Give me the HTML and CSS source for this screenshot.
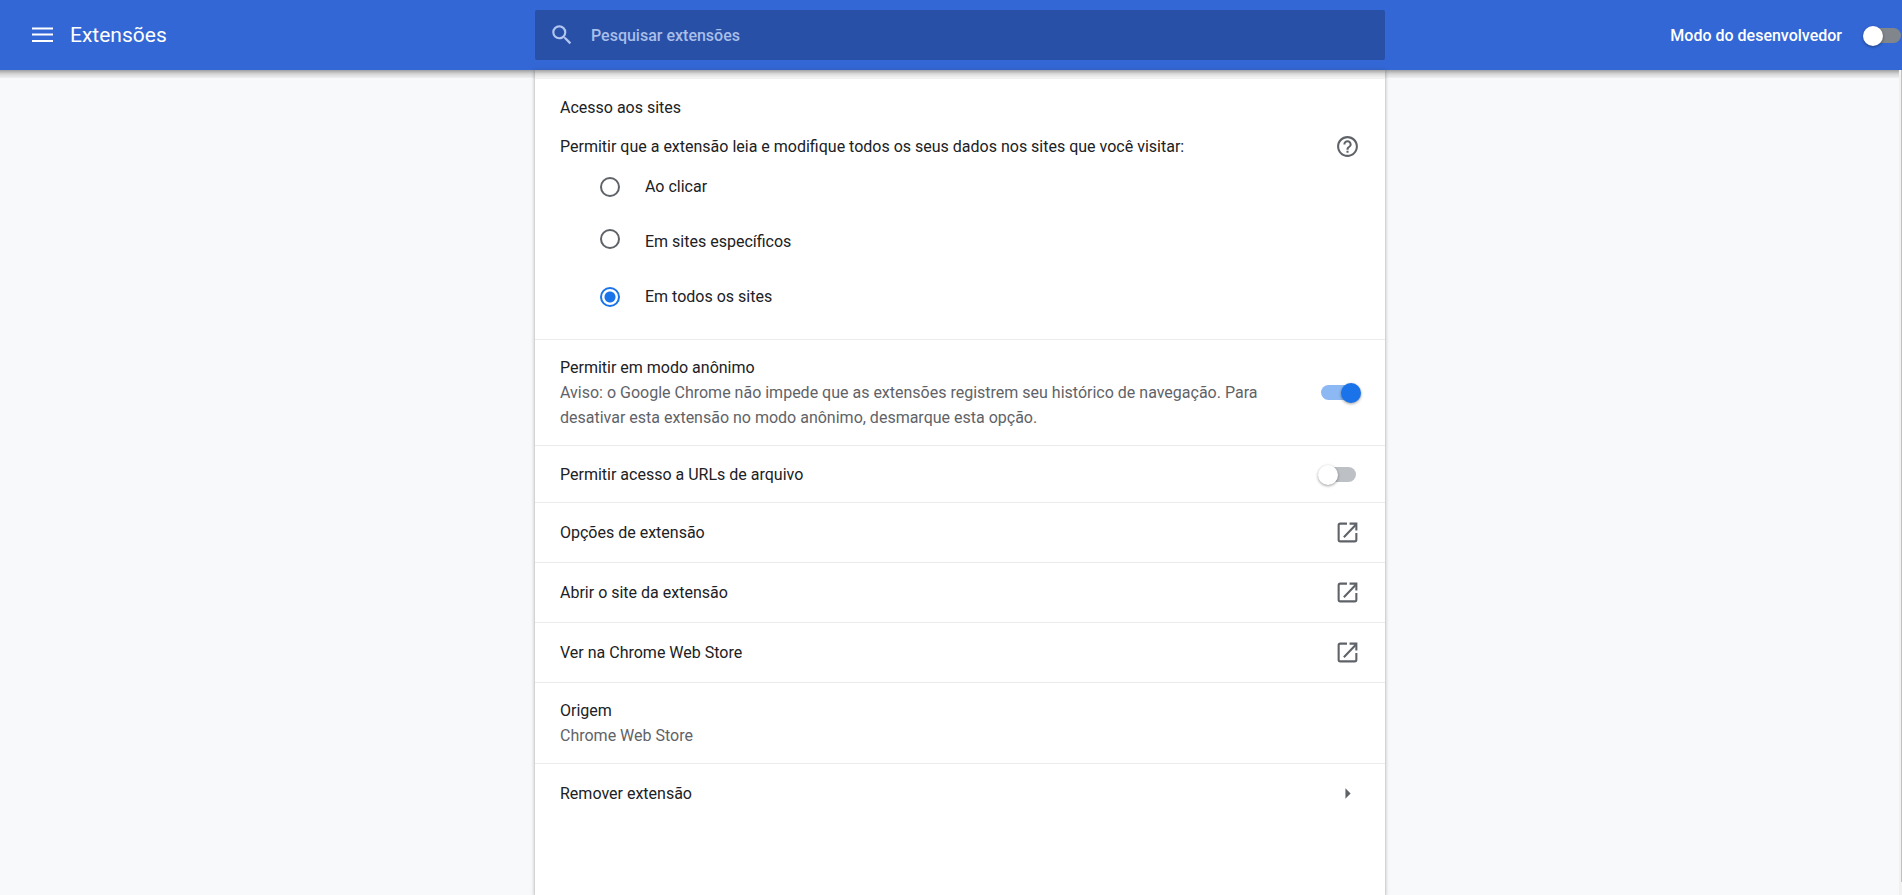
FILE: index.html
```html
<!DOCTYPE html>
<html lang="pt-BR">
<head>
<meta charset="utf-8">
<meta name="viewport" content="width=device-width, initial-scale=1">
<title>Extensões</title>
<link rel="stylesheet" href="styles.css">
</head>
<body>
<header class="toolbar">
  <div class="toolbar-start">
    <button class="icon-button" type="button" aria-label="Menu principal">
      <svg class="menu-icon" viewBox="0 0 21 16" aria-hidden="true"><path d="M0 .5h21v2H0zM0 6.500h21v2H0zM0 13h21v2H0z"/></svg>
    </button>
    <h1 class="title">Extensões</h1>
  </div>
  <label class="search">
    <svg class="search-icon" viewBox="0 0 24 24" aria-hidden="true"><path d="M15.5 14h-.79l-.28-.27A6.471 6.471 0 0 0 16 9.5 6.5 6.5 0 1 0 9.5 16c1.61 0 3.09-.59 4.23-1.57l.27.28v.79l5 4.99L20.49 19l-4.99-5zm-6 0C7.01 14 5 11.99 5 9.5S7.01 5 9.5 5 14 7.01 14 9.5 11.99 14 9.5 14z"/></svg>
    <input class="search-input" type="search" placeholder="Pesquisar extensões" aria-label="Pesquisar extensões">
  </label>
  <div class="toolbar-end">
    <label class="dev-label" for="dev-mode">Modo do desenvolvedor</label>
    <input class="switch switch-dark" type="checkbox" role="switch" id="dev-mode">
  </div>
</header>
<div class="page">
  <main class="card">
    <section class="access">
      <h2 class="label">Acesso aos sites</h2>
      <div class="access-head">
        <p class="label" id="access-question">Permitir que a extensão leia e modifique todos os seus dados nos sites que você visitar:</p>
        <a class="icon-button" href="#ajuda" aria-label="Ajuda">
          <svg class="icon" viewBox="0 0 24 24" aria-hidden="true"><path d="M11 18h2v-2h-2v2zm1-16C6.48 2 2 6.48 2 12s4.48 10 10 10 10-4.48 10-10S17.52 2 12 2zm0 18c-4.41 0-8-3.59-8-8s3.59-8 8-8 8 3.59 8 8-3.59 8-8 8zm0-14c-2.21 0-4 1.79-4 4h2c0-1.1.9-2 2-2s2 .9 2 2c0 2-3 1.75-3 5h2c0-2.25 3-2.5 3-5 0-2.21-1.79-4-4-4z"/></svg>
        </a>
      </div>
      <div class="options" role="radiogroup" aria-labelledby="access-question">
        <label class="option"><input class="radio" type="radio" name="access"><span>Ao clicar</span></label>
        <label class="option option-tall"><input class="radio" type="radio" name="access"><span>Em sites específicos</span></label>
        <label class="option"><input class="radio" type="radio" name="access" checked><span>Em todos os sites</span></label>
      </div>
    </section>
    <div class="row">
      <div class="row-text">
        <label class="label" for="incognito">Permitir em modo anônimo</label>
        <p class="secondary">Aviso: o Google Chrome não impede que as extensões registrem seu histórico de navegação. Para desativar esta extensão no modo anônimo, desmarque esta opção.</p>
      </div>
      <input class="switch" type="checkbox" role="switch" id="incognito" checked>
    </div>
    <div class="row">
      <label class="label" for="file-urls">Permitir acesso a URLs de arquivo</label>
      <input class="switch" type="checkbox" role="switch" id="file-urls">
    </div>
    <a class="row row-link" href="#opcoes">Opções de extensão
      <svg class="icon" viewBox="0 0 24 24" aria-hidden="true"><path class="launch" d="M11.5 3.5H5Q3.500 3.500 3.500 5v14q0 1.500 1.500 1.500h14q1.500 0 1.500-1.500v-6.500M8.500 16.500L19.500 5"/><path d="M14 2.500h7.500V10h-2V5.500L18.500 4.500H14z"/></svg>
    </a>
    <a class="row row-link" href="#site">Abrir o site da extensão
      <svg class="icon" viewBox="0 0 24 24" aria-hidden="true"><path class="launch" d="M11.5 3.5H5Q3.500 3.500 3.500 5v14q0 1.500 1.500 1.500h14q1.500 0 1.500-1.500v-6.500M8.500 16.500L19.500 5"/><path d="M14 2.500h7.500V10h-2V5.500L18.500 4.500H14z"/></svg>
    </a>
    <a class="row row-link" href="#loja">Ver na Chrome Web Store
      <svg class="icon" viewBox="0 0 24 24" aria-hidden="true"><path class="launch" d="M11.5 3.5H5Q3.500 3.500 3.500 5v14q0 1.500 1.500 1.500h14q1.500 0 1.500-1.500v-6.500M8.500 16.500L19.500 5"/><path d="M14 2.500h7.500V10h-2V5.500L18.500 4.500H14z"/></svg>
    </a>
    <div class="row">
      <div class="row-text">
        <h2 class="label">Origem</h2>
        <p class="secondary">Chrome Web Store</p>
      </div>
    </div>
    <button class="row row-link" type="button">Remover extensão
      <svg class="icon" viewBox="0 0 24 24" aria-hidden="true"><path d="M10 7l5 5-5 5z"/></svg>
    </button>
  </main>
  <div class="scrollbar" aria-hidden="true"><div class="scroll-thumb"></div></div>
</div>
</body>
</html>
```
FILE: styles.css
```css
* { box-sizing: border-box; }

body {
  margin: 0;
  height: 100vh;
  display: flex;
  flex-direction: column;
  overflow: hidden;
  background: #f8f9fa;
  color: #202124;
  font: 16px/25px Roboto, "Liberation Sans", sans-serif;
}

h1, h2, p { margin: 0; font-size: 16px; font-weight: 400; }

button, a, input { font: inherit; color: inherit; text-decoration: none; }

/* Toolbar */
.toolbar {
  display: grid;
  grid-template-columns: 1fr minmax(0, 850px) 1fr;
  align-items: center;
  padding: 10px 0 10px 18px;
  background: #3367d6;
  color: #fff;
}

.toolbar-start { display: flex; align-items: center; padding-left: 14px; gap: 17px; }

.icon-button {
  display: flex;
  padding: 0;
  border: 0;
  background: none;
  cursor: pointer;
}

.menu-icon { width: 21px; height: 16px; fill: #fff; }

.title { font-size: 21px; }

.search {
  display: flex;
  align-items: center;
  gap: 16px;
  height: 50px;
  padding: 0 16px 0 14px;
  border-radius: 2px;
  background: #2850a7;
}

.search-icon { width: 26px; height: 26px; flex: none; fill: #b1c6f0; }

.search-input {
  flex: 1;
  min-width: 0;
  padding: 0;
  border: 0;
  outline: 0;
  background: none;
  font-weight: 500;
}

.search-input::placeholder { color: #a9bee9; opacity: 1; }

.toolbar-end {
  display: flex;
  align-items: center;
  justify-content: flex-end;
  gap: 24px;
  padding-right: 1px;
}

.dev-label { font-weight: 500; }

/* Page body */
.page {
  flex: 1;
  min-height: 0;
  position: relative;
  display: flex;
  justify-content: center;
  padding-left: 18px;
}

.page::before {
  content: "";
  position: absolute;
  inset: 0 0 auto;
  height: 8px;
  background: linear-gradient(rgba(0, 0, 0, .36), rgba(0, 0, 0, .14) 50%, rgba(0, 0, 0, .04));
}

.card {
  width: 850px;
  padding-top: 8px;
  background: #fff;
  box-shadow: 0 1px 3px rgba(60, 64, 67, .3), 0 1px 4px 1px rgba(60, 64, 67, .15);
}

.access { padding: 16px 25px 30px; border-top: 1px solid #f0f0f0; }

.access-head { display: flex; align-items: center; justify-content: space-between; padding-top: 14px; }

.icon { width: 25px; height: 25px; flex: none; fill: #5f6368; }

.launch { fill: none; stroke: #5f6368; stroke-width: 2; }

.options { padding: 15px 0 0 40px; }

.option { display: flex; align-items: center; gap: 25px; height: 25px; }

.option-tall { height: 85px; align-items: flex-start; padding-top: 30px; }

.radio {
  appearance: none;
  width: 20px;
  height: 20px;
  margin: 0;
  border: 2px solid #5f6368;
  border-radius: 50%;
}

.radio:checked {
  border-color: #1a73e8;
  background: radial-gradient(circle, #1a73e8 5px, transparent 6px);
}

.row {
  display: flex;
  align-items: center;
  justify-content: space-between;
  width: 100%;
  min-height: 57px;
  padding: 15px 25px;
  border: 0;
  border-top: 1px solid #ebebeb;
  background: none;
  text-align: left;
}

.row-link { min-height: 60px; cursor: pointer; }

.row-text { max-width: 725px; }

.label { display: block; }

.secondary { color: #5f6368; }

/* Switches: a 35px track with a round thumb over one end */
.switch {
  appearance: none;
  position: relative;
  flex: none;
  width: 35px;
  height: 15px;
  margin: 0 4px 0 0;
  border-radius: 8px;
  background: #bdc1c6;
  cursor: pointer;
}

.switch::before {
  content: "";
  position: absolute;
  top: -2px;
  left: -3px;
  width: 20px;
  height: 20px;
  border-radius: 50%;
  background: #fff;
  box-shadow: 0 1px 3px rgba(0, 0, 0, .4);
}

.switch:checked { background: #8cb8f3; }

.switch:checked::before { left: auto; right: -5px; background: #1a73e8; }

.switch-dark { margin: 0; background: #80868b; }

.scrollbar {
  position: absolute;
  inset: 0 0 0 auto;
  width: 3px;
  padding: 0 0 13px 2px;
  background: #f1f1f1;
}

.scroll-thumb { height: 100%; background: #c1c1c1; }
```
